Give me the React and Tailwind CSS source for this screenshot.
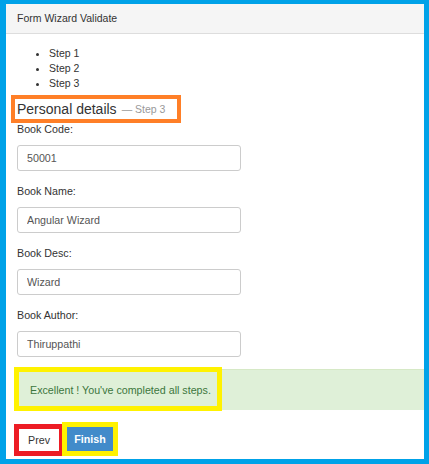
import React from 'react';

const fields = [
  { label: 'Book Code:', value: '50001' },
  { label: 'Book Name:', value: 'Angular Wizard' },
  { label: 'Book Desc:', value: 'Wizard' },
  { label: 'Book Author:', value: 'Thiruppathi' },
];

function App() {
  return (
    <div className="w-[429px] h-[464px] overflow-hidden bg-white border-[#00a2e8] border-l-[6px] border-t-4 border-r-[5px] border-b-[5px] font-['Liberation_Sans',Arial,sans-serif] text-[#333]">
      {/* panel heading */}
      <div className="h-[30px] bg-[#f5f5f5] border-b border-[#ddd] pl-[11px] flex items-center text-[10.5px]">
        Form Wizard Validate
      </div>

      <div className="pl-[11px]">
        <ul className="list-disc pl-[32px] mt-[12px] text-[10.5px] leading-[15px]">
          <li>Step 1</li>
          <li>Step 2</li>
          <li>Step 3</li>
        </ul>

        <div className="mt-[4px] -ml-[6px] w-[170px] h-[28px] border-4 border-[#ff7f27] flex items-center pl-[2px] whitespace-nowrap">
          <span className="text-[14px] leading-none">Personal details</span>
          <span className="text-[10.5px] leading-none text-[#999] ml-[5px]">— Step 3</span>
        </div>

        <div className="-mt-[2px]">
          {fields.map((f) => (
            <div key={f.label}>
              <label className="block text-[10.7px] leading-[16px] mb-[8px]">{f.label}</label>
              <input
                readOnly
                value={f.value}
                className="block w-[224px] h-[26px] border border-[#ccc] rounded-[3px] px-[9px] text-[10.7px] text-[#555] mb-[12px] outline-none"
              />
            </div>
          ))}
        </div>

        {/* success alert */}
        <div className="relative mt-[2px] -ml-[3px] h-[41px] bg-[#dff0d8] border-t border-[#d6e9c6] flex items-center pl-[16px] text-[10.7px] text-[#3c763d]">
          Excellent ! You've completed all steps.
          <div className="absolute left-0 -top-[3px] w-[208px] h-[44px] border-[5px] border-[#fff200]" />
        </div>

        <div className="mt-[12px] -ml-[3px] flex items-start">
          <button className="mt-[2px] w-[50px] h-[32px] border-[5px] border-[#ed1c24] bg-white flex items-center justify-center text-[10.7px] text-[#333]">
            Prev
          </button>
          <div className="-ml-[2px] w-[56px] h-[34px] border-[5px] border-[#fff200]">
            <button className="w-full h-full bg-[#428bca] text-white font-bold text-[10.7px] flex items-center justify-center">
              Finish
            </button>
          </div>
        </div>
      </div>
    </div>
  );
}

export default App;
